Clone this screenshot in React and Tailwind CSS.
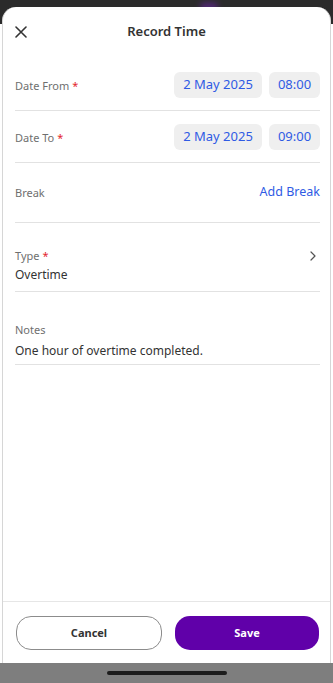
import React from 'react';

const Label = ({ text, required }) => (
  <div className="text-[11px] leading-[15px] text-[#6f6f6f]">
    {text}
    {required && <span className="ml-[3px] text-[#e3262e]">*</span>}
  </div>
);

const Chip = ({ children, w }) => (
  <div className={`flex h-[26px] items-center justify-center rounded-[6px] bg-[#efefef] text-[13px] text-[#2f5be4] ${w}`}>
    {children}
  </div>
);

const DateRow = ({ label, date, time, top }) => (
  <div className={`flex items-center justify-between border-b border-[#e2e2e2] pb-[12px] ${top}`}>
    <Label text={label} required />
    <div className="flex gap-[7px]">
      <Chip w="w-[88px]">{date}</Chip>
      <Chip w="w-[51px]">{time}</Chip>
    </div>
  </div>
);

const App = () => {
  return (
    <div className="relative flex h-[683px] w-[333px] flex-col overflow-hidden bg-[linear-gradient(#2b2b2b_0px,#2b2b2b_24px,#ffffff_24px)] font-['Noto_Sans',sans-serif]">
      {/* purple glow from the screen behind */}
      <div className="absolute left-[200px] top-[3px] h-[8px] w-[18px] rounded-full bg-[#7b22c9] opacity-50 blur-[3px]" />

      <div className="relative ml-[2px] mr-[2px] mt-[7px] flex flex-1 flex-col rounded-t-[14px] border-x border-[#d6d6d6] bg-white">
        {/* header */}
        <div className="relative flex h-[50px] items-center px-[12px]">
          <svg width="12" height="12" viewBox="0 0 12 12" fill="none">
            <path d="M1 1L11 11M11 1L1 11" stroke="#333" strokeWidth="1.6" strokeLinecap="round" />
          </svg>
          <div className="absolute inset-x-0 text-center text-[13px] font-semibold text-[#333]">Record Time</div>
        </div>

        <div className="pl-[12px] pr-[10px]">
          <DateRow label="Date From" date="2 May 2025" time="08:00" top="pt-[15px]" />
          <DateRow label="Date To" date="2 May 2025" time="09:00" top="pt-[13px]" />

          <div className="flex h-[60px] items-center justify-between border-b border-[#e2e2e2]">
            <Label text="Break" />
            <div className="text-[12.5px] text-[#2f5be4]">Add Break</div>
          </div>

          <div className="border-b border-[#e2e2e2] pb-[7px] pt-[25px]">
            <div className="flex items-center justify-between">
              <Label text="Type" required />
              <svg width="8" height="10" viewBox="0 0 8 10" fill="none" className="mr-[3px]">
                <path d="M2 1L6 5L2 9" stroke="#555" strokeWidth="1.2" strokeLinecap="round" strokeLinejoin="round" />
              </svg>
            </div>
            <div className="mt-[3px] text-[12px] leading-[18px] text-[#333]">Overtime</div>
          </div>

          <div className="border-b border-[#e2e2e2] pb-[4px] pt-[30px]">
            <Label text="Notes" />
            <div className="mt-[5px] text-[12px] leading-[18px] text-[#333]">One hour of overtime completed.</div>
          </div>
        </div>

        <div className="flex-1" />

        {/* footer */}
        <div className="flex gap-[13px] border-t border-[#e6e6e6] pb-[13px] pl-[13px] pr-[11px] pt-[14px]">
          <button className="flex h-[34px] flex-1 items-center justify-center rounded-[15px] border border-[#8c8c8c] bg-white text-[11px] font-bold text-[#333]">
            Cancel
          </button>
          <button className="flex h-[34px] flex-1 items-center justify-center rounded-[15px] bg-[#6000a9] text-[11px] font-bold text-white">
            Save
          </button>
        </div>
      </div>

      <div className="flex h-[20px] items-center justify-center bg-[#7e7e7e]">
        <div className="h-[4px] w-[120px] rounded-full bg-[#1c1c1c]" />
      </div>
    </div>
  );
};

export default App;
